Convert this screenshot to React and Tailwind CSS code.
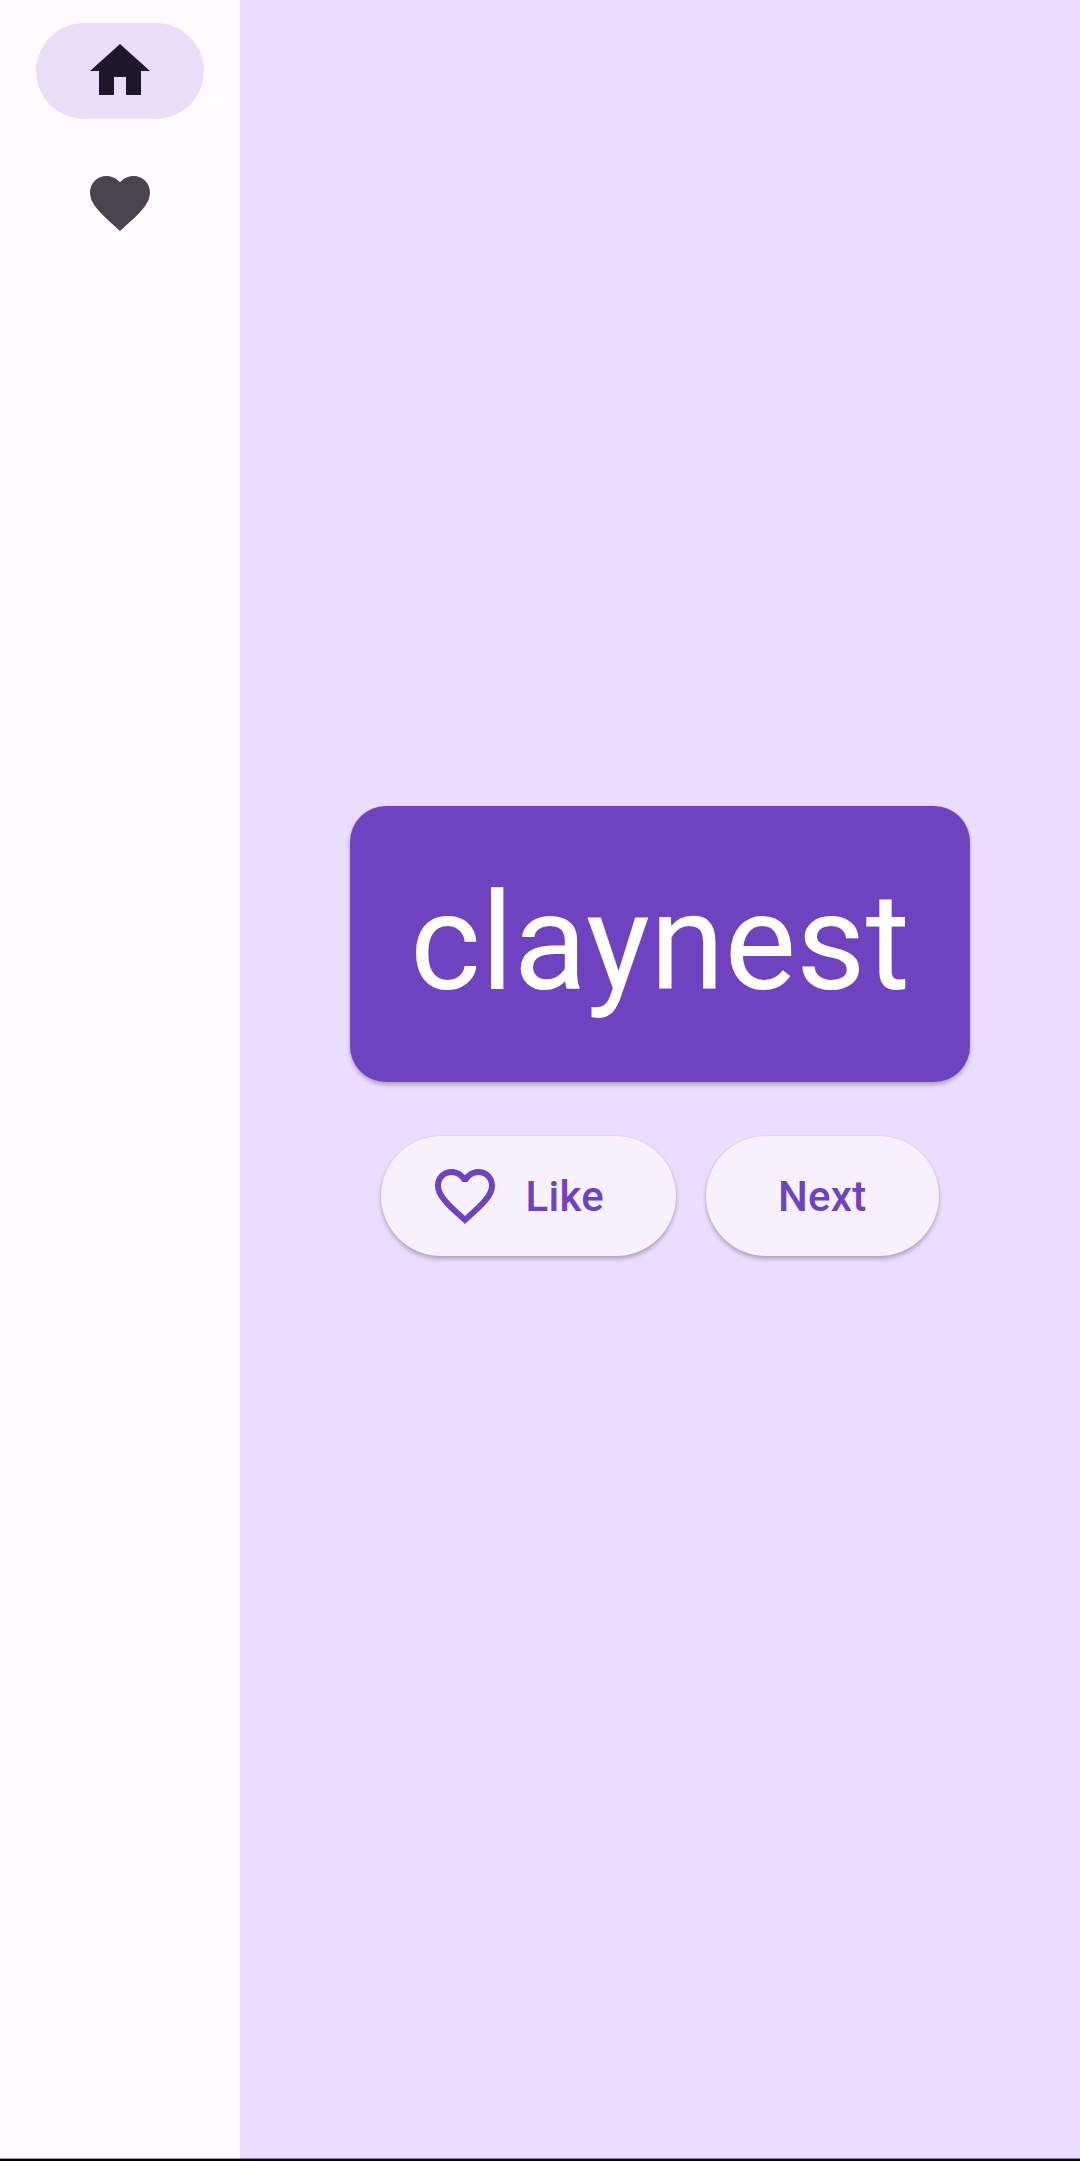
function Icon({ d, className }) {
  return (
    <svg viewBox="0 0 24 24" fill="currentColor" className={className} aria-hidden="true">
      <path d={d} />
    </svg>
  );
}

const HOME = "M10 20v-6h4v6h5v-8h3L12 3 2 12h3v8z";
const HEART =
  "M12 21.35l-1.45-1.32C5.4 15.36 2 12.28 2 8.5 2 5.42 4.42 3 7.5 3c1.74 0 3.41.81 4.5 2.09C13.09 3.81 14.76 3 16.5 3 19.58 3 22 5.42 22 8.5c0 3.78-3.4 6.86-8.55 11.54L12 21.35z";
const HEART_OUTLINE =
  "M16.5 3c-1.74 0-3.41.81-4.5 2.09C10.91 3.81 9.24 3 7.5 3 4.42 3 2 5.42 2 8.5c0 3.78 3.4 6.86 8.55 11.54L12 21.35l1.45-1.32C18.6 15.36 22 12.28 22 8.5 22 5.42 19.58 3 16.5 3zm-4.4 15.55l-.1.1-.1-.1C7.14 14.24 4 11.39 4 8.5 4 6.5 5.5 5 7.5 5c1.54 0 3.04.99 3.57 2.36h1.87C13.46 5.99 14.96 5 16.5 5c2 0 3.5 1.5 3.5 3.5 0 2.89-3.14 5.74-7.9 10.05z";

function NavItem({ icon, label, selected }) {
  return (
    <button
      aria-label={label}
      className={
        selected
          ? "flex h-24 w-[168px] items-center justify-center rounded-full bg-[#e8def8] text-[#1f182b]"
          : "flex h-24 w-[168px] items-center justify-center rounded-full text-[#49454e]"
      }
    >
      <Icon d={icon} className="size-[72px]" />
    </button>
  );
}

function ElevatedButton({ icon, children }) {
  return (
    <button
      className={
        icon
          ? "flex h-[120px] w-[294.4px] items-center gap-6 rounded-full bg-[#f6f1fc] pl-12 shadow-[0_3px_4px_rgba(0,0,0,0.25),0_0_2px_rgba(0,0,0,0.08)]"
          : "flex h-[120px] w-[232.8px] items-center justify-center rounded-full bg-[#f6f1fc] shadow-[0_3px_4px_rgba(0,0,0,0.25),0_0_2px_rgba(0,0,0,0.08)]"
      }
    >
      {icon && <Icon d={icon} className="size-[72px]" />}
      <span className="pt-0.5 text-[42px] leading-[60px] font-medium tracking-[0.3px]">{children}</span>
    </button>
  );
}

export default function App() {
  return (
    <div className="flex h-[2161px] w-[1080px] flex-col bg-black font-[Roboto,sans-serif]">
      <div className="flex h-[2158px]">
        <nav className="flex w-60 flex-col items-center gap-9 bg-[#fffbff] pt-[23px]">
          <NavItem icon={HOME} label="Home" selected />
          <NavItem icon={HEART} label="Favorites" />
        </nav>
        <main className="flex flex-1 flex-col items-center bg-[#eaddff] pt-[806px] text-[#6f43bf]">
          <div className="rounded-[36px] bg-[#6f43bf] px-[60px] pt-[59px] pb-[61px] text-[135px] leading-[156px] text-white shadow-[0_3px_4px_rgba(0,0,0,0.25),0_0_2px_rgba(0,0,0,0.08)]">
            claynest
          </div>
          <div className="mt-[54px] flex gap-[30px]">
            <ElevatedButton icon={HEART_OUTLINE}>Like</ElevatedButton>
            <ElevatedButton>Next</ElevatedButton>
          </div>
        </main>
      </div>
      <div className="flex h-px">
        <div className="w-60 bg-[#999699]" />
        <div className="flex-1 bg-[#8c8499]" />
      </div>
    </div>
  );
}
